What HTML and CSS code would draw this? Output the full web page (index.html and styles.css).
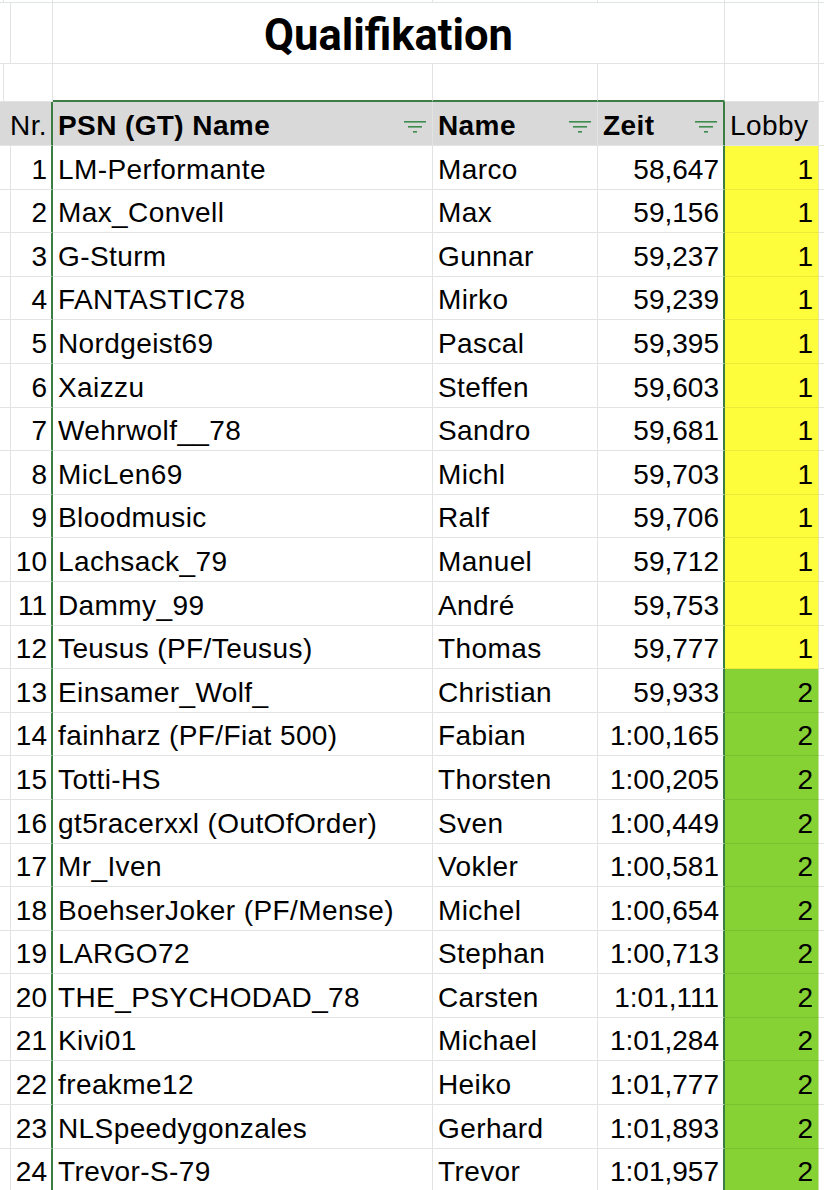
FILE: index.html
```html
<!DOCTYPE html>
<html lang="de">
<head>
<meta charset="utf-8">
<title>Qualifikation</title>
<link rel="stylesheet" href="styles.css">
</head>
<body>
<div class="sheet">
  <div class="row r-top">
    <div class="c"></div><div class="c"></div><div class="c"></div><div class="c"></div><div class="c"></div><div class="c"></div><div class="c last"></div>
  </div>
  <div class="row r-title">
    <div class="c"></div><div class="c"></div><div class="c title">Qualifikation</div><div class="c"></div><div class="c last"></div>
  </div>
  <div class="row r-empty">
    <div class="c"></div><div class="c"></div><div class="c range-top"></div><div class="c range-top"></div><div class="c range-top"></div><div class="c"></div><div class="c last"></div>
  </div>
  <div class="row r-head">
    <div class="c hd"></div>
    <div class="c hd num range-left">Nr.</div>
    <div class="c hd bold filter"><span>PSN (GT) Name</span><svg class="ficon" viewBox="0 0 22 12" width="22" height="12"><rect x="0" y="0" width="22" height="1.6"/><rect x="4" y="5" width="14" height="1.6"/><rect x="9" y="10" width="4" height="1.6"/></svg></div>
    <div class="c hd bold filter"><span>Name</span><svg class="ficon" viewBox="0 0 22 12" width="22" height="12"><rect x="0" y="0" width="22" height="1.6"/><rect x="4" y="5" width="14" height="1.6"/><rect x="9" y="10" width="4" height="1.6"/></svg></div>
    <div class="c hd bold filter range-right"><span>Zeit</span><svg class="ficon" viewBox="0 0 22 12" width="22" height="12"><rect x="0" y="0" width="22" height="1.6"/><rect x="4" y="5" width="14" height="1.6"/><rect x="9" y="10" width="4" height="1.6"/></svg></div>
    <div class="c hd">Lobby</div>
    <div class="c last"></div>
  </div>
  <div id="rows"></div>
</div>
<script src="script.js"></script>
</body>
</html>
```

FILE: script.js
```js
const data = [
  [1, "LM-Performante", "Marco", "58,647", 1],
  [2, "Max_Convell", "Max", "59,156", 1],
  [3, "G-Sturm", "Gunnar", "59,237", 1],
  [4, "FANTASTIC78", "Mirko", "59,239", 1],
  [5, "Nordgeist69", "Pascal", "59,395", 1],
  [6, "Xaizzu", "Steffen", "59,603", 1],
  [7, "Wehrwolf__78", "Sandro", "59,681", 1],
  [8, "MicLen69", "Michl", "59,703", 1],
  [9, "Bloodmusic", "Ralf", "59,706", 1],
  [10, "Lachsack_79", "Manuel", "59,712", 1],
  [11, "Dammy_99", "André", "59,753", 1],
  [12, "Teusus (PF/Teusus)", "Thomas", "59,777", 1],
  [13, "Einsamer_Wolf_", "Christian", "59,933", 2],
  [14, "fainharz (PF/Fiat 500)", "Fabian", "1:00,165", 2],
  [15, "Totti-HS", "Thorsten", "1:00,205", 2],
  [16, "gt5racerxxl (OutOfOrder)", "Sven", "1:00,449", 2],
  [17, "Mr_Iven", "Vokler", "1:00,581", 2],
  [18, "BoehserJoker (PF/Mense)", "Michel", "1:00,654", 2],
  [19, "LARGO72", "Stephan", "1:00,713", 2],
  [20, "THE_PSYCHODAD_78", "Carsten", "1:01,111", 2],
  [21, "Kivi01", "Michael", "1:01,284", 2],
  [22, "freakme12", "Heiko", "1:01,777", 2],
  [23, "NLSpeedygonzales", "Gerhard", "1:01,893", 2],
  [24, "Trevor-S-79", "Trevor", "1:01,957", 2]
];
const host = document.getElementById("rows");
for (const [nr, psn, name, zeit, lobby] of data) {
  const row = document.createElement("div");
  row.className = "row r-data";
  row.innerHTML =
    '<div class="c"></div>' +
    '<div class="c num range-left">' + nr + '</div>' +
    '<div class="c txt">' + psn + '</div>' +
    '<div class="c txt">' + name + '</div>' +
    '<div class="c num range-right">' + zeit + '</div>' +
    '<div class="c num lobby lobby-' + lobby + '">' + lobby + '</div>' +
    '<div class="c last"></div>';
  host.appendChild(row);
}
```

FILE: styles.css
```css
* { box-sizing: border-box; }
html, body {
  margin: 0;
  padding: 0;
  background: #ffffff;
  overflow: hidden;
}
body {
  font-family: "Liberation Sans", Arial, sans-serif;
  font-size: 28px;
  color: #000;
}
.sheet {
  width: 824px;
}
.row {
  display: grid;
  grid-template-columns: 4px 49px 380px 165px 127px 94px 1fr;
}
.c {
  border-right: 1px solid #e2e3e3;
  border-bottom: 1px solid #e2e3e3;
  display: flex;
  align-items: flex-end;
  padding: 0 5px 3px 5px;
  white-space: nowrap;
  overflow: hidden;
  min-width: 0;
}
.txt, .hd { letter-spacing: 0.4px; }
.c.last { border-right: none; }
.r-top { height: 3px; }
.r-top .c { border-bottom-color: #dfe6e0; padding: 0; }
.r-title { height: 61px; }
.r-empty { height: 38px; }
.r-head { height: 44px; }
.r-data { height: 43.6px; }
.r-top .c, .r-empty .c { padding: 0; }
.title {
  grid-column: 3 / span 3;
  justify-content: center;
  font-family: Roboto, "Liberation Sans", sans-serif;
  font-weight: 700;
  font-size: 43.5px;
  padding-bottom: 2px;
}
.range-top { border-bottom: 2px solid #3b7d45; }
.range-left { border-right: 2px solid #3b7d45; }
.range-right { border-right: 2px solid #3b7d45; }
.hd {
  background: #d9d9d9;
}
.r-head .c.last { background: #fff; }
.bold { font-weight: 700; }
.num {
  justify-content: flex-end;
  padding-right: 4px;
}
.filter {
  justify-content: space-between;
  padding-right: 6px;
}
.ficon {
  fill: #3d8b4d;
  flex: none;
  margin-bottom: 9px;
}
.lobby { padding-right: 5px; }
.lobby-1 {
  background: #fefd3c;
  border-bottom-color: #ecea3a;
  border-right-color: #e3e3a8;
}
.lobby-2 {
  background: #86d134;
  border-bottom-color: #79c22e;
  border-right-color: #c4e3a4;
}
```
